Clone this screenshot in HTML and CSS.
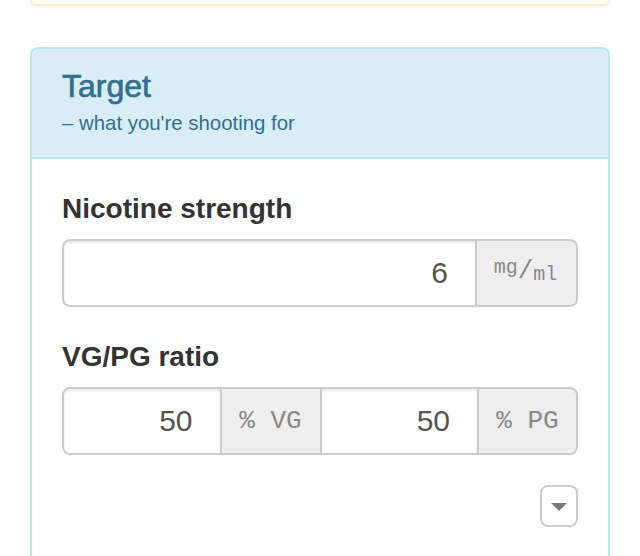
FILE: index.html
```html
<!DOCTYPE html>
<html lang="en">
<head>
    <meta charset="UTF-8">
    <meta name="viewport" content="width=device-width, initial-scale=1.0">
    <title>Target</title>
    <link rel="stylesheet" href="styles.css">
</head>
<body>
    <div class="container">
        <!-- bottom edge of the panel above -->
        <div class="panel panel-warning panel-tail"></div>

        <div class="panel panel-info">
            <div class="panel-heading">
                <h3 class="panel-title">Target</h3>
                <div class="panel-sub">&ndash; what you're shooting for</div>
            </div>
            <div class="panel-body">
                <div class="form-group">
                    <label for="nic">Nicotine strength</label>
                    <div class="input-group">
                        <input type="text" id="nic" class="form-control" value="6">
                        <span class="addon addon-unit"><sup>mg</sup>/<sub>ml</sub></span>
                    </div>
                </div>

                <div class="form-group">
                    <label for="vg">VG/PG ratio</label>
                    <div class="input-group">
                        <input type="text" id="vg" class="form-control" value="50">
                        <span class="addon addon-vg">%&nbsp;VG</span>
                        <input type="text" id="pg" class="form-control" value="50">
                        <span class="addon addon-pg">%&nbsp;PG</span>
                    </div>
                </div>

                <div class="more">
                    <button type="button" class="btn-caret"><span class="caret"></span></button>
                </div>
            </div>
        </div>
    </div>
</body>
</html>
```

FILE: styles.css
```css
body
{
    margin: 0;
    background-color: #fff;
    font-family: "Liberation Sans", Arial, sans-serif;
    color: #333;
}

div.container
{
    padding: 0 30px;
}

/* 패널 공통 */
div.panel
{
    border: 2px solid transparent;
    border-radius: 8px;
    background-color: #fff;
    box-shadow: 0 2px 2px rgba(0, 0, 0, 0.04);
}

div.panel-tail
{
    height: 4px;
    border-color: #faebcc;
    border-top: none;
    border-radius: 0 0 8px 8px;
    background-color: #fffdf7;
    margin-bottom: 41px;
}

div.panel-info
{
    border-color: #bce8f1;
    border-bottom: none;
    border-radius: 8px 8px 0 0;
}

div.panel-info div.panel-heading
{
    background-color: #d9edf7;
    border-bottom: 2px solid #bce8f1;
    border-radius: 6px 6px 0 0;
    color: #31708f;
    padding: 20px 30px 20px;
}

div.panel-heading h3.panel-title
{
    margin: 0;
    font-size: 32px;
    font-weight: normal;
    line-height: 1.1;
    -webkit-text-stroke: 0.7px #31708f;
}

div.panel-heading div.panel-sub
{
    margin-top: 5px;
    font-size: 20.4px;
    line-height: 28px;
}

div.panel-body
{
    padding: 30px 30px 60px;
}

div.form-group
{
    margin-bottom: 30px;
}

div.form-group label
{
    display: block;
    font-size: 28px;
    font-weight: bold;
    line-height: 40px;
    margin-bottom: 10px;
}

/* 입력창 + 단위 묶음 */
div.input-group
{
    display: flex;
    height: 68px;
}

div.input-group .form-control
{
    flex: 1 1 0;
    min-width: 0;
    box-sizing: border-box;
    height: 68px;
    border: 2px solid #ccc;
    background-color: #fff;
    box-shadow: inset 0 2px 2px rgba(0, 0, 0, 0.09);
    padding: 0 27px 0 0;
    text-align: right;
    font-family: "Liberation Sans", Arial, sans-serif;
    font-size: 30px;
    color: #555;
    outline: none;
}

div.input-group .form-control:first-child
{
    border-radius: 8px 0 0 8px;
}

div.input-group .addon
{
    box-sizing: border-box;
    height: 68px;
    margin-left: -2px;
    border: 2px solid #ccc;
    background-color: #eee;
    display: flex;
    align-items: center;
    justify-content: center;
    font-family: "Liberation Mono", "Courier New", monospace;
    font-size: 26px;
    color: #888;
}

div.input-group .addon:last-child
{
    border-radius: 0 8px 8px 0;
}

div.input-group .addon + .form-control
{
    margin-left: -2px;
}

span.addon-unit
{
    width: 103px;
    padding: 0 2px 4px 0;
}

span.addon-unit sup,
span.addon-unit sub
{
    font-size: 20px;
    line-height: 0;
}

span.addon-unit sup
{
    position: relative;
    top: -3px;
}

span.addon-unit sub
{
    position: relative;
    top: 4px;
}

span.addon-vg
{
    width: 102px;
}

span.addon-pg
{
    width: 101px;
}

div.more
{
    display: flex;
    justify-content: flex-end;
}

button.btn-caret
{
    width: 38px;
    height: 42px;
    padding: 0;
    border: 2px solid #ccc;
    border-radius: 8px;
    background-color: #fff;
    display: flex;
    align-items: center;
    justify-content: center;
}

span.caret
{
    width: 0;
    height: 0;
    border-top: 8px solid #777;
    border-left: 8px solid transparent;
    border-right: 8px solid transparent;
    margin-top: 2px;
}
```
